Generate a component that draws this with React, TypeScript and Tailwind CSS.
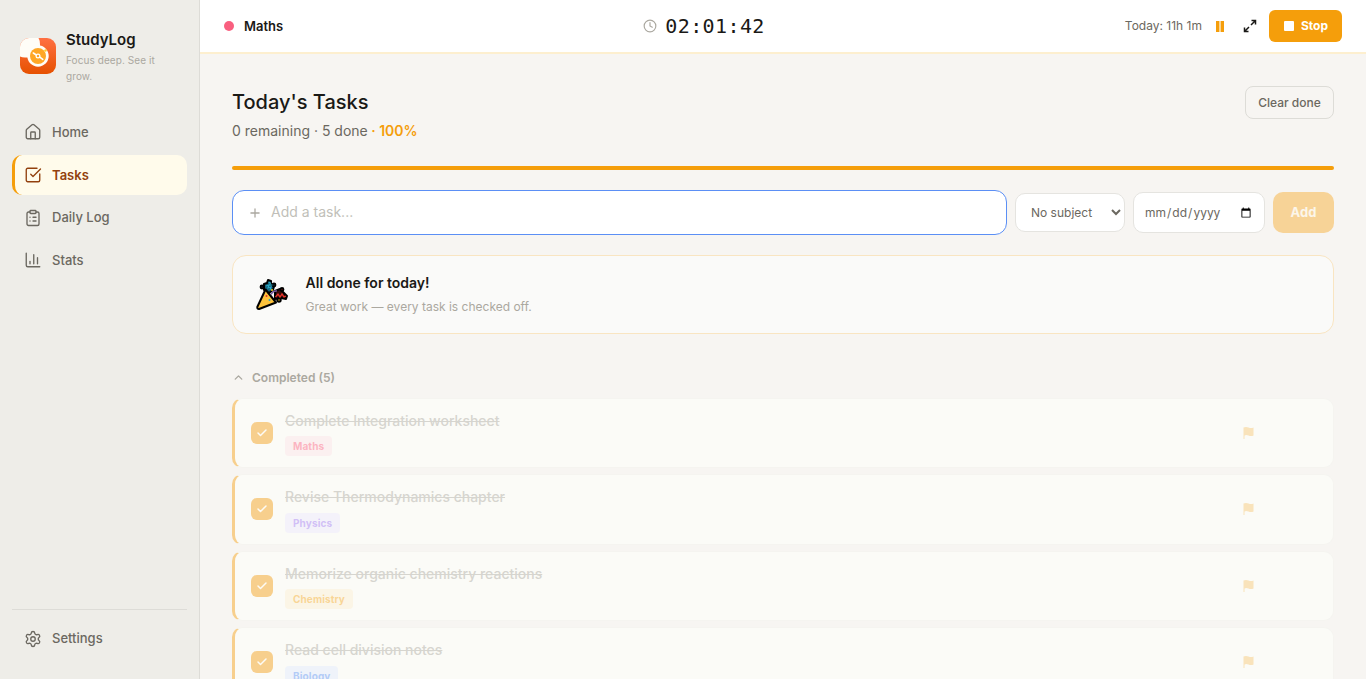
import { ReactNode } from 'react';
import {
  ChartColumn,
  Check,
  ChevronUp,
  ClipboardList,
  Clock,
  House,
  Plus,
  Settings,
  SquareCheckBig,
} from 'lucide-react';
import clsx from 'clsx';

interface Task {
  title: string;
  subject: string;
  tagClass: string;
}

const TASKS: Task[] = [
  { title: 'Complete Integration worksheet', subject: 'Maths', tagClass: 'bg-[#fce4e8] text-[#fb6080]' },
  { title: 'Revise Thermodynamics chapter', subject: 'Physics', tagClass: 'bg-[#ede9fe] text-[#a078f6]' },
  { title: 'Memorize organic chemistry reactions', subject: 'Chemistry', tagClass: 'bg-[#fdefd3] text-[#f6a821]' },
  { title: 'Read cell division notes', subject: 'Biology', tagClass: 'bg-[#e2ebfe] text-[#5b93f8]' },
  { title: 'Write essay outline', subject: 'English', tagClass: 'bg-[#d1fae5] text-[#34d399]' },
];

function Logo() {
  return (
    <svg width="36" height="36" viewBox="0 0 36 36" className="shrink-0 rounded-[9px]">
      <defs>
        <linearGradient id="logoBg" x1="0" y1="0" x2="0" y2="1">
          <stop offset="0" stopColor="#ff7043" />
          <stop offset="1" stopColor="#e65100" />
        </linearGradient>
      </defs>
      <rect width="36" height="36" fill="url(#logoBg)" />
      <path d="M0 0h18.500q1.500 2.500 1.500 6.500V19.500H5Q2 19.500 0 18.500z" fill="#fffdf7" />
      <circle cx="18" cy="18" r="10.700" fill="#fffdf7" />
      <circle cx="18" cy="18" r="8" fill="#ffa726" />
      <path d="M13.300 15l3 2M19.800 19.200l3 2.200" stroke="#fff" strokeWidth="1.600" strokeLinecap="round" />
      <circle cx="18" cy="18" r="1.900" fill="none" stroke="#fff" strokeWidth="1.200" />
      <circle cx="25.500" cy="12.500" r="1.200" fill="#ffca28" />
    </svg>
  );
}

function PartyPopper() {
  return (
    <svg width="34" height="34" viewBox="0 0 34 34" className="shrink-0">
      {/* streamers */}
      <g stroke="#000" strokeWidth="2" strokeLinejoin="round" strokeLinecap="round">
        <path d="M9 6l3-1 1-3 3 1v3l3 2-1 4-4 3-5-3z" fill="#17627a" />
        <path d="M20 13l5-2 3 3 4 4-1 3-5-1-6 1z" fill="#3a0d0b" />
        <circle cx="7" cy="9" r="1.400" fill="#8967aa" />
        <circle cx="19" cy="7" r="1.400" fill="#2aa7c4" />
        <circle cx="27" cy="11.500" r="1.400" fill="#e8362c" />
        <circle cx="24" cy="22" r="1.700" fill="#f5d21f" />
        <path d="M10.500 11.500L2.300 29q-.2 2.200 1.800 2L21 24.500z" fill="#fdc33c" />
      </g>
      <path d="M11 8l3-1-1 3 3-1-1 3M13.500 4l2 1-1 2 3 0" fill="none" stroke="#2aa7c4" strokeWidth="1.100" />
      <path d="M20.500 19l2.500-3 2 3 2-3 2 3 2-1" fill="none" stroke="#e8362c" strokeWidth="1.300" />
      <path d="M16 16.500q2-4 6-3.500" fill="none" stroke="#7a5aa0" strokeWidth="1.600" />
      <circle cx="11.500" cy="18" r="1" fill="#e8362c" />
      <circle cx="14.500" cy="22" r="1" fill="#2aa7c4" />
      <circle cx="17" cy="12" r="1" fill="#f5d21f" />
    </svg>
  );
}

function Flag() {
  return (
    <svg width="12" height="14" viewBox="0 0 12 14" fill="#f59e0b">
      <path d="M.5 1.500q2.500-1 5 0t5 0v8q-2.500 1-5 0t-4 0V13h-1z" />
    </svg>
  );
}

function NavItem({ icon, label, active = false }: { icon: ReactNode; label: string; active?: boolean }) {
  return (
    <a
      className={clsx(
        'flex items-center gap-2.5 rounded-[10px] border-l-3 py-2.5 pl-[9px] text-[13px] leading-[20.8px] font-medium',
        active ? 'border-[#f59e0b] bg-[#fffbeb] font-semibold text-[#92400e]' : 'border-transparent text-[#6b6860]'
      )}
    >
      {icon}
      {label}
    </a>
  );
}

function Sidebar() {
  return (
    <aside className="flex w-[200px] shrink-0 flex-col border-r border-[#dddcd7] bg-[#eeede8] px-3">
      <div className="mt-[28px] mb-[28px] flex items-center gap-2.5 px-2">
        <Logo />
        <div>
          <p className="text-[15px] leading-[24px] font-semibold text-[#1a1916]">StudyLog</p>
          <p className="text-[10px] leading-[16px] tracking-[0.080px] text-[#aba8a0]">Focus deep. See it grow.</p>
        </div>
      </div>
      <nav className="flex flex-col gap-[1.900px]">
        <NavItem icon={<House size={18} strokeWidth={1.8} />} label="Home" />
        <NavItem icon={<SquareCheckBig size={18} strokeWidth={1.8} />} label="Tasks" active />
        <NavItem icon={<ClipboardList size={18} strokeWidth={1.8} />} label="Daily Log" />
        <NavItem icon={<ChartColumn size={18} strokeWidth={1.8} />} label="Stats" />
      </nav>
      <div className="mt-auto mb-5 border-t border-[#dddcd7] pt-2">
        <NavItem icon={<Settings size={18} strokeWidth={1.8} />} label="Settings" />
      </div>
    </aside>
  );
}

function TimerBar() {
  return (
    <header className="flex h-[54px] shrink-0 items-center justify-between border-b-2 border-[#fdefcf] bg-white px-6">
      <div className="flex items-center gap-2.5">
        <span className="size-2.5 rounded-full bg-[#f95f7f]" />
        <span className="pt-px text-[13px] font-semibold text-[#1a1916]">Maths</span>
      </div>
      <div className="flex items-center gap-2">
        <Clock size={14} strokeWidth={2} className="text-[#aba8a0]" />
        <span className="font-['DejaVu_Sans_Mono',monospace] text-[20px] leading-8 tracking-[0.4px] text-[#1a1916]">
          02:01:42
        </span>
      </div>
      <div className="flex items-center">
        <span className="text-[12px] text-[#6b6860]">Today: 11h 1m</span>
        <span className="ml-[14px] flex h-[11px] w-2 justify-between bg-[#fbd694]">
          <i className="w-[3px] bg-[#f59e0b]" />
          <i className="w-[3px] bg-[#f59e0b]" />
        </span>
        <svg width="14" height="14" viewBox="0 0 14 14" fill="none" stroke="#1a1916" strokeWidth="1.500" className="mr-[12px] ml-[19px]">
          <path d="M8.500 1.500h4v4M12.500 1.500L8 6M5.500 12.500h-4v-4M1.500 12.500L6 8" />
        </svg>
        <button className="flex h-8 w-[73px] items-center justify-center gap-[7px] rounded-md bg-[#f59e0b] pl-px text-[12px] font-bold text-white">
          <span className="size-2.5 rounded-[1px] bg-white" />
          Stop
        </button>
      </div>
    </header>
  );
}

function AddTaskForm() {
  return (
    <form className="mt-5 flex items-center gap-2">
      <label className="flex h-[45px] flex-1 items-center gap-[9px] rounded-xl border border-[#5b8ff5] bg-white px-[15px]">
        <Plus size={14} strokeWidth={2.2} className="text-[#aba8a0]" />
        <input placeholder="Add a task..." className="flex-1 pb-0.5 text-[14px] outline-none placeholder:text-[#c1bfb9]" />
      </label>
      <select className="h-[39px] w-[110px] rounded-[10px] border border-[#e5e4e0] bg-white pl-[11px] text-[12px] text-[#6b6860]">
        <option>No subject</option>
      </select>
      <input
        type="date"
        className="h-[41px] w-[132px] rounded-[10px] border border-[#e5e4e0] bg-white px-2.5 text-[12px] text-[#6b6860]"
      />
      <button type="button" className="h-[41px] w-[61px] rounded-[10px] bg-[#f7d397] text-[13px] font-bold text-[#fcf6ea]">
        Add
      </button>
    </form>
  );
}

function TaskRow({ task }: { task: Task }) {
  return (
    <li className="flex h-[70.4px] shrink-0 items-center gap-3 rounded-[10px] border border-l-3 border-[#f5f4f0] border-l-[#f7cf8d] bg-[#fbfbf7] pl-4">
      <span className="mb-[0.600px] flex size-[22px] items-center justify-center rounded-md bg-[#f7cf8d] text-[#fdfbf5]">
        <Check size={12} strokeWidth={3} />
      </span>
      <div className="flex flex-1 flex-col items-start gap-1 opacity-45">
        <p className="text-[14px] leading-[22.4px] font-medium text-[#aba8a0] line-through">{task.title}</p>
        <span className={clsx('h-5 rounded px-2 text-[10px] leading-[21px] font-bold tracking-[0.120px]', task.tagClass)}>
          {task.subject}
        </span>
      </div>
      <span className="mr-[78px] mb-[0.600px] opacity-25">
        <Flag />
      </span>
    </li>
  );
}

export default function App() {
  return (
    <div className="flex h-screen overflow-hidden bg-[#f7f5f2] font-['Inter',sans-serif] text-[#1a1916]">
      <Sidebar />
      <div className="flex min-w-0 flex-1 flex-col">
        <TimerBar />
        <main className="flex-1 overflow-hidden px-8 pt-8">
          <div className="flex items-start justify-between">
            <div>
              <h1 className="text-[20px] leading-8 font-medium">Today's Tasks</h1>
              <p className="mt-0.5 mb-px text-[14px] leading-[22px] text-[#6b6860]">
                0 remaining · 5 done <span className="-ml-[0.500px] font-semibold text-[#f59e0b]">· 100%</span>
              </p>
            </div>
            <button className="h-[33px] w-[89px] rounded-lg border border-[#dddcd7] text-[12px] font-medium text-[#6b6860]">
              Clear done
            </button>
          </div>

          <div className="mt-[23px] h-1 rounded-full bg-[#f59e0b]" />

          <AddTaskForm />

          {/* Empty state */}
          <div className="mt-5 flex h-[79px] items-center gap-[16.600px] rounded-[14px] border border-[#f9e5c2] bg-[#fafaf9] px-[22px]">
            <PartyPopper />
            <div>
              <p className="text-[14px] leading-[22px] font-semibold">All done for today!</p>
              <p className="mt-[3px] text-[12px] leading-5 text-[#aba8a0]">Great work — every task is checked off.</p>
            </div>
          </div>

          <button className="mt-[34px] flex items-center gap-[7px] text-[12px] leading-5 font-semibold text-[#aba8a0]">
            <ChevronUp size={13} strokeWidth={2.5} className="mb-px" />
            Completed (5)
          </button>
          <ul className="mt-2.5 flex flex-col gap-1.5">
            {TASKS.map(task => (
              <TaskRow key={task.title} task={task} />
            ))}
          </ul>
        </main>
      </div>
    </div>
  );
}
